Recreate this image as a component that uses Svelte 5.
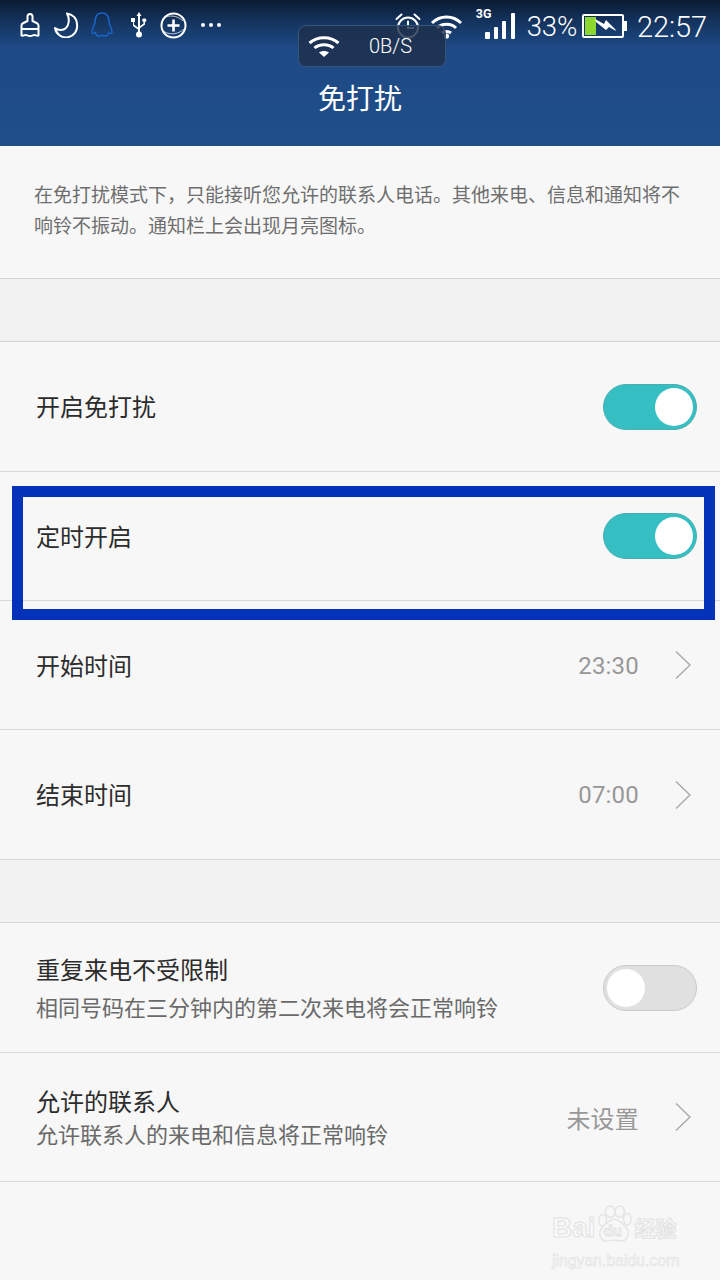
<script>
  const rowsA = [
    { title: '开启免打扰', on: true, tall: true },
    { title: '定时开启', on: true, top: true },
    { title: '开始时间', value: '23:30' },
    { title: '结束时间', value: '07:00', tall: true }
  ];
  const rowsB = [
    { title: '重复来电不受限制', sub: '相同号码在三分钟内的第二次来电将会正常响铃', on: false, tall: true, wide: true },
    { title: '允许的联系人', sub: '允许联系人的来电和信息将正常响铃', value: '未设置' }
  ];
</script>

{#snippet row(r)}
  <div class="row" class:top={r.top} class:two={r.sub} class:tall={r.tall} class:wide={r.wide}>
    <div class="text">
      <div class="title">{r.title}</div>
      {#if r.sub}<div class="sub">{r.sub}</div>{/if}
    </div>
    {#if r.value}
      <span class="value">{r.value}</span>
      <svg class="chev" width="18" height="30" viewBox="0 0 18 30"><path d="M2 1.500 16 15 2 28.500" fill="none" stroke="#a9a9a9" stroke-width="1.400"/></svg>
    {:else}
      <div class="switch" class:on={r.on}><span class="knob"></span></div>
    {/if}
  </div>
{/snippet}

<div class="page">
  <header>
    <div class="status">
      <div class="left">
        <svg width="24" height="26" viewBox="0 0 24 26" fill="none" stroke="#fff" stroke-width="2" stroke-linejoin="round"><path d="M9.500 9V4.500a2.500 2.500 0 0 1 5 0V9l5 2.500c1 .6 1 1.500 1 2.500v9.500c-1.500 1-2.500-.5-4-.5s-2 1-4.500 1-3-1-4.500-1-2.500 1.500-4 .5V14c0-1 0-2 1-2.500z"/><path d="M3.500 17h17"/></svg>
        <svg width="26" height="26" viewBox="0 0 26 26" fill="none" stroke="#fff" stroke-width="2"><path d="M14 1.500c5.500.5 10 5 10 11a11 11 0 0 1-22 3.500c3 2.500 8 3 11 0s4-9 1-14.500z" stroke-linejoin="round"/></svg>
        <svg width="24" height="26" viewBox="0 0 24 26" fill="none" stroke="#1a64c8" stroke-width="1.500"><path d="M12 1C6.500 1 5 6 5 10c0 3-3 6-3 10 0 2 1 2 3 .5.500 1.500 1.500 2.500 2.500 3.500 1.500.5 3-.5 4.500-.5s3 1 4.500.5c1-1 2-2 2.500-3.500 2 1.500 3 1.500 3-.5 0-4-3-7-3-10 0-4-1.500-9-7-9z"/></svg>
        <svg class="usb" width="18" height="26" viewBox="0 0 18 26" fill="#fff"><path d="M9 0l2.500 4h-1.500v18h-2V4H6.500z"/><circle cx="9" cy="22.500" r="3"/><path d="M1 6h4v4H4v2.500l4 3v2l-5-3.500V10H1z"/><path d="M15 6.500a1.800 1.800 0 0 1 0 3.500v2.500l-5.500 4v-2l4-3V10a1.800 1.800 0 0 1 1-3.500z"/></svg>
        <svg width="27" height="27" viewBox="0 0 27 27" fill="none" stroke="#fff"><circle cx="13.500" cy="13.500" r="12" stroke-width="2"/><path d="M4 6c5-3 13-3 19 3M3 19c6 4 15 4 21-2" stroke-width="1" opacity=".7"/><path d="M13.500 7.500v12M7.500 13.500h12" stroke-width="2.600"/></svg>
        <span class="dots"><i></i><i></i><i></i></span>
      </div>
      <div class="right">
        <svg class="alarm" width="26" height="28" viewBox="0 0 26 28" fill="none" stroke="#fff" stroke-width="2"><circle cx="13" cy="15.500" r="10"/><path d="M13 9.500v6.500h5.500M1.500 7l5-4.500M24.500 7l-5-4.500" stroke-linecap="round"/></svg>
        <svg class="wifi" width="33" height="26" viewBox="0 0 33 26" fill="none" stroke="#fff" stroke-width="3"><path d="M2 10c8-8 21-8 29 0M7 15c5-5 14-5 19 0M12 20c2.500-2 6.500-2 9 0"/><circle cx="16.500" cy="23" r="2.600" fill="#fff" stroke="none"/></svg>
        <div class="signal">
          <span class="g3">3G</span>
          <svg width="31" height="26" viewBox="0 0 31 26" fill="#fff"><rect x="0" y="19" width="5" height="7" rx="1"/><rect x="9" y="14" width="4" height="12" rx="1"/><rect x="17" y="8" width="4" height="18" rx="1"/><rect x="26" y="0" width="4" height="26" rx="1"/></svg>
        </div>
        <span class="pct">33%</span>
        <svg class="batt" width="45" height="24" viewBox="0 0 45 24"><rect x="1" y="1" width="40" height="22" fill="none" stroke="#fff" stroke-width="2" rx="1"/><rect x="3" y="3" width="11" height="18" fill="#8ed630"/><rect x="42" y="7" width="3" height="10" fill="#fff"/><path d="M13 5l9 5 2-4 9 9 1 2-7-4-3 3-10-8z" fill="#fff"/></svg>
        <span class="clock">22:57</span>
      </div>
    </div>
    <div class="speed">
      <svg width="32" height="24" viewBox="0 0 32 24" fill="none" stroke="#fff" stroke-width="3"><path d="M1.500 9c8-7 21-7 29 0M6.500 14c5-4.500 14-4.500 19 0"/><path d="M11 18.500l5 4.500 5-4.500c-3-2-7-2-10 0z" fill="#fff" stroke="none"/></svg>
      <span>0B/S</span>
    </div>
    <h1>免打扰</h1>
  </header>

  <section class="intro">在免打扰模式下，只能接听您允许的联系人电话。其他来电、信息和通知将不响铃不振动。通知栏上会出现月亮图标。</section>
  <div class="gap"></div>
  {#each rowsA as r}{@render row(r)}{/each}
  <div class="gap"></div>
  {#each rowsB as r}{@render row(r)}{/each}

  <div class="highlight"></div>

  <div class="mark">
    <div class="mark-top">
      <span class="bai">Bai</span>
      <div class="paw">
        <svg width="38" height="40" viewBox="0 0 40 40" fill="#f7f7f7" stroke="#e4e4e4" stroke-width="1.500"><ellipse cx="8" cy="16" rx="4" ry="6"/><ellipse cx="16" cy="7" rx="5" ry="6"/><ellipse cx="26" cy="7" rx="5" ry="6"/><ellipse cx="34" cy="15" rx="4" ry="6"/><path d="M20 15c6 0 9 5 13 9 4 5 1 14-5 14-3 0-5-1-8-1s-5 1-8 1c-6 0-9-8-5-14 4-3 7-9 13-9z"/></svg>
        <span class="du">du</span>
      </div>
      <span class="jy">经验</span>
    </div>
    <div class="url">jingyan.baidu.com</div>
  </div>
</div>

<style>
  :global(body) { margin: 0; background: #f7f7f7; }
  .page {
    position: relative;
    width: 720px;
    height: 1280px;
    overflow: hidden;
    background: #f7f7f7;
    font-family: "Noto Sans CJK SC", "Roboto", sans-serif;
  }
  header {
    position: relative;
    height: 146px;
    box-sizing: border-box;
    background: linear-gradient(to bottom, #0b1b33 0, #14345f 22px, #1e4a85 48px, #1f4e88 146px);
    color: #fff;
  }
  .status {
    height: 50px;
    box-sizing: border-box;
    padding: 12px 13px 0 18px;
    display: flex;
    justify-content: space-between;
    align-items: flex-start;
  }
  .left { display: flex; align-items: flex-start; gap: 11px; }
  .usb { margin: 0 1px 0 5px; }
  .dots { display: flex; gap: 4px; margin: 11px 0 0 3px; }
  .dots i { width: 4px; height: 4px; border-radius: 50%; background: #fff; }
  .right { display: flex; align-items: flex-start; font-family: Roboto, sans-serif; font-weight: 300; }
  .alarm { margin: 0 9px 0 0; }
  .wifi { margin: 1px 8px 0 0; }
  .signal { position: relative; width: 31px; margin: 1px 0 0 14px; }
  .g3 { position: absolute; left: -9px; top: -5px; font-size: 12.500px; font-weight: 700; line-height: 12px; }
  .pct { font-size: 27.500px; line-height: 30px; margin: 0 5px 0 11px; letter-spacing: -0.2px; }
  .batt { margin: 2px 0 0 0; }
  .clock { font-size: 29px; line-height: 30px; margin-left: 10px; letter-spacing: -0.1px; }
  .speed {
    position: absolute;
    left: 298px;
    top: 25px;
    width: 148px;
    height: 42px;
    box-sizing: border-box;
    border: 1px solid #3a5476;
    border-radius: 8px;
    background: rgba(30, 48, 76, 0.82);
    display: flex;
    align-items: center;
    padding-left: 9px;
    font: 300 20px Roboto, sans-serif;
  }
  .speed span { margin-left: 29px; }
  h1 {
    margin: 0;
    font-size: 28px;
    font-weight: 400;
    line-height: 40px;
    text-align: center;
    padding-top: 27px;
  }
  .intro {
    height: 133px;
    box-sizing: border-box;
    padding: 32px 36px 0 34px;
    font-size: 19px;
    line-height: 31px;
    color: #6e6e6e;
    border-bottom: 1px solid #d4d4d4;
  }
  .gap {
    height: 63px;
    box-sizing: border-box;
    background: #f2f2f2;
    border-bottom: 1px solid #d4d4d4;
  }
  .row {
    height: 129px;
    box-sizing: border-box;
    padding: 0 23px 0 36px;
    display: flex;
    align-items: center;
    border-bottom: 1px solid #d8d8d8;
  }
  .row.tall { height: 130px; }
  .row.top { align-items: flex-start; padding-top: 41px; }
  .row.top .text { margin-top: 2px; }
  .row.top .title { margin-top: 4px; }
  .text { flex: 1; margin-top: -1px; }
  .title { font-size: 24px; line-height: 34px; color: #2c2c2c; }
  .two .text { margin-top: -3px; }
  .two.wide .text { margin-top: -3px; }
  .sub { font-size: 22px; line-height: 30px; color: #6a6a6a; }
  .wide .sub { margin-top: 5px; }
  .value { font: 24px Roboto, "Noto Sans CJK SC", sans-serif; letter-spacing: 0.2px; color: #989898; margin: 1px 35px 0 0; }
  .chev { margin-right: 5px; }
  .switch {
    width: 94px;
    height: 46px;
    box-sizing: border-box;
    border-radius: 23px;
    border: 1px solid #c9c9c9;
    background: #e0e0e0;
    position: relative;
    margin-top: 1px;
  }
  .top .switch { margin-top: 0; }
  .switch.on { background: #36bfc2; border: 1px solid #4caeb0; }
  .knob {
    position: absolute;
    top: 3px;
    left: 3px;
    width: 38px;
    height: 38px;
    border-radius: 50%;
    background: #fff;
  }
  .on .knob { left: auto; right: 3px; }
  .highlight {
    position: absolute;
    left: 12px;
    top: 486px;
    width: 703px;
    height: 134px;
    box-sizing: border-box;
    border: 11px solid #0432b8;
  }
  .mark {
    position: absolute;
    left: 552px;
    top: 1202px;
    color: #f9f9f9;
    -webkit-text-stroke: 1px #e2e2e2;
    font-family: "Liberation Sans", "Noto Sans CJK SC", sans-serif;
  }
  .mark-top { display: flex; align-items: flex-end; height: 42px; }
  .bai { font-size: 28px; font-weight: 700; line-height: 33px; }
  .paw { position: relative; width: 38px; height: 40px; margin-left: -1px; }
  .du { position: absolute; left: 9px; top: 18px; font-size: 15px; font-weight: 700; line-height: 18px; }
  .jy { font-size: 21px; line-height: 30px; font-weight: 700; margin-left: 2px; }
  .url { font-size: 15.800px; line-height: 18px; margin-top: 8px; -webkit-text-stroke-width: 0.600px; }
</style>
